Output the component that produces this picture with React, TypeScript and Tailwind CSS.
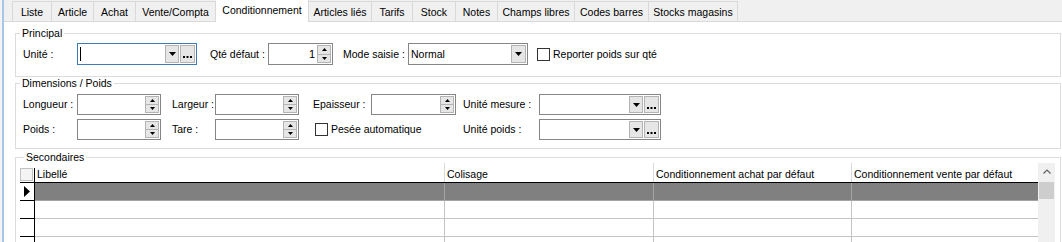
import React from 'react';

const tabs = [
  { label: 'Liste', w: 'w-[40px]' },
  { label: 'Article', w: 'w-[42px]' },
  { label: 'Achat', w: 'w-[42px]' },
  { label: 'Vente/Compta', w: 'w-[80px]' },
  { label: 'Conditionnement', w: 'w-[93px]', active: true },
  { label: 'Articles liés', w: 'w-[63px]' },
  { label: 'Tarifs', w: 'w-[41px]' },
  { label: 'Stock', w: 'w-[43px]' },
  { label: 'Notes', w: 'w-[42px]' },
  { label: 'Champs libres', w: 'w-[77px]' },
  { label: 'Codes barres', w: 'w-[74px]' },
  { label: 'Stocks magasins', w: 'w-[89px]' }
];

function DownArrow() {
  return (
    <svg width="7" height="4" viewBox="0 0 7 4">
      <path d="M0 0h7L3.5 4z" fill="#000" />
    </svg>
  );
}

function Dots() {
  return (
    <svg width="9" height="2" viewBox="0 0 9 2" className="mt-[6px]">
      <rect x="0" y="0" width="2" height="2" fill="#000" />
      <rect x="3.5" y="0" width="2" height="2" fill="#000" />
      <rect x="7" y="0" width="2" height="2" fill="#000" />
    </svg>
  );
}

function DropButton() {
  return (
    <div className="w-[14px] my-[1px] bg-[#e6e6e6] border border-[#b4b4b4] flex items-center justify-center">
      <DownArrow />
    </div>
  );
}

function ComboBox({ w, focused, ellipsis = true }: { w: string; focused?: boolean; ellipsis?: boolean }) {
  return (
    <div className={`${w} h-full bg-white border flex ${focused ? 'border-[#3d7bb6]' : 'border-[#868686]'}`}>
      <div className="flex-1 flex items-center pl-[2px]">
        {focused && <div className="w-[1px] h-[14px] bg-black" />}
      </div>
      <DropButton />
      {ellipsis && (
        <div className="w-[15px] m-[1px] bg-[#e6e6e6] border border-[#b4b4b4] flex items-center justify-center">
          <Dots />
        </div>
      )}
    </div>
  );
}

function Spin({ w, value }: { w: string; value?: string }) {
  return (
    <div className={`${w} h-full bg-white border border-[#868686] flex`}>
      <div className="flex-1 flex items-center justify-end pr-[2px] text-[11px]">{value}</div>
      <div className="w-[14px] mr-[1px] my-[1px] flex flex-col">
        <div className="flex-1 bg-[#e6e6e6] border border-[#b4b4b4] flex items-center justify-center">
          <svg width="5" height="3" viewBox="0 0 5 3">
            <path d="M0 3h5L2.5 0z" fill="#000" />
          </svg>
        </div>
        <div className="flex-1 bg-[#e6e6e6] border border-[#b4b4b4] border-t-0 flex items-center justify-center">
          <svg width="5" height="3" viewBox="0 0 5 3">
            <path d="M0 0h5L2.5 3z" fill="#000" />
          </svg>
        </div>
      </div>
    </div>
  );
}

function CheckBox() {
  return <div className="w-[13px] h-[13px] bg-white border border-[#333333]" />;
}

const cols = [
  { label: 'Libellé', w: 'w-[410px] border-r' },
  { label: 'Colisage', w: 'w-[209px] border-r' },
  { label: 'Conditionnement achat par défaut', w: 'w-[198px] border-r' },
  { label: 'Conditionnement vente par défaut', w: 'flex-1' }
];

const rows = [0, 1, 2, 3, 4];

export default function App() {
  return (
    <div className="w-[1062px] h-[242px] overflow-hidden flex bg-white text-black text-[10.5px] leading-[13px] whitespace-nowrap font-['Liberation_Sans',Arial,sans-serif]">
      <div className="w-[2px] bg-[#f3f3f3]" />
      <div className="w-[2px] bg-[#a8c6e6]" />
      <div className="flex-1 flex flex-col">
        {/* onglets */}
        <div className="h-[22px] flex items-end bg-[#f0f0f0] border-b border-[#d9d9d9] pl-[8px]">
          {tabs.map((t, i) => (
            <div
              key={t.label}
              className={`${t.w} flex justify-center border-r border-t border-[#d9d9d9] ${i === 0 ? 'border-l' : ''} ${
                t.active ? 'h-[23px] -mb-[1px] bg-white pt-[4px]' : 'h-[20px] bg-[#f0f0f0] pt-[4px]'
              }`}
            >
              {t.label}
            </div>
          ))}
        </div>

        <div className="flex-1 pl-[11px] pr-[1px]">
          <fieldset className="mt-[5px] border border-[#dcdcdc] pt-[4px] pb-[11px]">
            <legend className="ml-[4px] px-[2px] leading-[12px]">Principal</legend>
            <div className="h-[22px] flex items-center pl-[7px]">
              <span className="w-[54px]">Unité :</span>
              <ComboBox w="w-[120px]" focused />
              <span className="ml-[13px] w-[58px]">Qté défaut :</span>
              <Spin w="w-[65px]" value="1" />
              <span className="ml-[10px] w-[65px]">Mode saisie :</span>
              <div className="w-[120px] h-full bg-white border border-[#868686] flex">
                <div className="flex-1 flex items-center pl-[2px]">Normal</div>
                <div className="w-[15px] mr-[1px] my-[1px] bg-[#e6e6e6] border border-[#b4b4b4] flex items-center justify-center">
                  <DownArrow />
                </div>
              </div>
              <div className="ml-[9px]">
                <CheckBox />
              </div>
              <span className="ml-[3px]">Reporter poids sur qté</span>
            </div>
          </fieldset>

          <fieldset className="border border-[#dcdcdc] pt-[5px] pb-[8px]">
            <legend className="ml-[4px] px-[2px] leading-[12px]">Dimensions / Poids</legend>
            <div className="flex flex-col gap-[4px] pl-[7px]">
              <div className="h-[21px] flex items-center">
                <span className="w-[54px]">Longueur :</span>
                <Spin w="w-[84px]" />
                <span className="ml-[11px] w-[43px]">Largeur :</span>
                <Spin w="w-[84px]" />
                <span className="ml-[14px] w-[58px]">Epaisseur :</span>
                <Spin w="w-[85px]" />
                <span className="ml-[7px] w-[76px]">Unité mesure :</span>
                <ComboBox w="w-[122px]" />
              </div>
              <div className="h-[21px] flex items-center">
                <span className="w-[54px]">Poids :</span>
                <Spin w="w-[84px]" />
                <span className="ml-[11px] w-[43px]">Tare :</span>
                <Spin w="w-[84px]" />
                <div className="ml-[16px] w-[148px] flex items-center">
                  <CheckBox />
                  <span className="ml-[3px]">Pesée automatique</span>
                </div>
                <span className="w-[76px]">Unité poids :</span>
                <ComboBox w="w-[122px]" />
              </div>
            </div>
          </fieldset>

          <fieldset className="mt-[2px] border border-[#dcdcdc] pl-[4px] pr-[5px]">
            <legend className="ml-[4px] px-[2px] leading-[12px]">Secondaires</legend>
            <div className="flex">
              <div className="flex-1 flex flex-col">
                <div className="h-[20px] flex border-b border-black">
                  <div className="w-[15px] pt-[5px]">
                    <div className="h-[14px] border-r border-black">
                      <div className="w-[13px] h-[13px] bg-[#f4f4f4] border border-[#c2c2c2]" />
                    </div>
                  </div>
                  {cols.map(c => (
                    <div key={c.label} className={`${c.w} border-[#dadada] pl-[2px] pt-[5px]`}>
                      {c.label}
                    </div>
                  ))}
                </div>
                {rows.map(r => (
                  <div key={r} className={`h-[18px] flex ${r === 0 ? 'bg-[#808080]' : 'bg-white'}`}>
                    <div className="w-[15px] bg-white border-r border-b border-black flex items-center pl-[4px]">
                      {r === 0 && (
                        <svg width="6" height="11" viewBox="0 0 6 11">
                          <path d="M0 0l6 5.5L0 11z" fill="#000" />
                        </svg>
                      )}
                    </div>
                    {cols.map(c => (
                      <div
                        key={c.label}
                        className={`${c.w} border-b ${r === 0 ? 'border-[#a4a4a4]' : 'border-[#c4c4c4]'}`}
                      />
                    ))}
                  </div>
                ))}
              </div>
              <div className="w-[17px] bg-[#f0f0f0] flex flex-col">
                <div className="h-[17px] flex items-center justify-center">
                  <svg width="8" height="5" viewBox="0 0 8 5">
                    <path d="M0.5 4.5L4 1l3.5 3.5" fill="none" stroke="#606060" strokeWidth="1.2" />
                  </svg>
                </div>
                <div className="mt-[2px] mx-[1px] h-[17px] bg-[#cdcdcd]" />
              </div>
            </div>
          </fieldset>
        </div>
      </div>
    </div>
  );
}
